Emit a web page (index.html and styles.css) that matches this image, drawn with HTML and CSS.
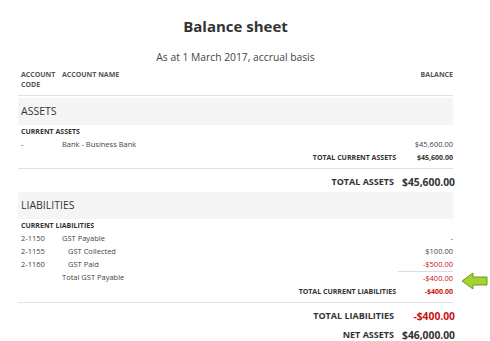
FILE: index.html
```html
<!DOCTYPE html>
<html>
<head>
<meta charset="utf-8">
<link rel="stylesheet" href="styles.css">
</head>
<body>
<div class="report">
  <h1 class="title">Balance sheet</h1>
  <div class="subtitle">As at 1 March 2017, accrual basis</div>

  <div class="row head">
    <div class="code">ACCOUNT<br>CODE</div>
    <div class="name">ACCOUNT NAME</div>
    <div class="amt">BALANCE</div>
  </div>

  <div class="band">ASSETS</div>
  <div class="row sub"><div class="span">CURRENT ASSETS</div></div>
  <div class="row"><div class="code">-</div><div class="name">Bank - Business Bank</div><div class="amt">$45,600.00</div></div>
  <div class="row tot"><div class="label">TOTAL CURRENT ASSETS</div><div class="amt">$45,600.00</div></div>
  <div class="divider"></div>
  <div class="row big"><div class="label">TOTAL ASSETS</div><div class="amt">$45,600.00</div></div>

  <div class="band">LIABILITIES</div>
  <div class="row sub"><div class="span">CURRENT LIABILITIES</div></div>
  <div class="row"><div class="code">2-1150</div><div class="name">GST Payable</div><div class="amt">-</div></div>
  <div class="row"><div class="code">2-1155</div><div class="name indent">GST Collected</div><div class="amt">$100.00</div></div>
  <div class="row"><div class="code">2-1160</div><div class="name indent">GST Paid</div><div class="amt neg">-$500.00</div></div>
  <div class="row subtot"><div class="code"></div><div class="name">Total GST Payable</div><div class="amt neg ruled">-$400.00</div></div>
  <div class="row tot"><div class="label">TOTAL CURRENT LIABILITIES</div><div class="amt neg">-$400.00</div></div>
  <div class="divider"></div>
  <div class="row big"><div class="label">TOTAL LIABILITIES</div><div class="amt neg">-$400.00</div></div>
  <div class="row big net"><div class="label">NET ASSETS</div><div class="amt">$46,000.00</div></div>

  <svg class="arrow" width="28" height="18" viewBox="0 0 28 18">
    <polygon points="1,9 12,1 12,5 26,5 26,13 12,13 12,17" fill="#a4d233" stroke="#6f9a1e" stroke-width="1" stroke-linejoin="round"/>
  </svg>
</div>
</body>
</html>
```

FILE: styles.css
```css
* { box-sizing: border-box; }
html, body { margin: 0; padding: 0; background: #fff; }
body {
  font-family: "Open Sans", "Liberation Sans", sans-serif;
  color: #444;
}
.report {
  position: relative;
  width: 435px;
  margin-left: 18px;
  padding-top: 16px;
}
.title {
  margin: 0;
  font-size: 15px;
  line-height: 20px;
  font-weight: 700;
  color: #333;
  text-align: center;
}
.subtitle {
  margin-top: 13px;
  font-size: 10.3px;
  line-height: 16px;
  text-align: center;
  color: #444;
}
.row {
  display: grid;
  grid-template-columns: 41px 1fr 55px;
  padding-left: 3px;
  font-size: 7.5px;
  line-height: 13px;
}
.row .amt { text-align: right; }
.row .label {
  grid-column: 1 / 3;
  text-align: right;
  padding-right: 2px;
}
.row .span { grid-column: 1 / 4; }
.head {
  margin-top: 5px;
  padding-bottom: 5px;
  border-bottom: 1px solid #e2e2e2;
  font-size: 7px;
  line-height: 10px;
  font-weight: 700;
  color: #555;
}
.band {
  margin-top: 2px;
  height: 27px;
  padding-left: 3px;
  background: #f5f5f5;
  font-size: 10.5px;
  line-height: 27px;
  color: #333;
}
.sub {
  font-weight: 700;
  font-size: 7px;
  color: #333;
}
.indent { padding-left: 6px; }
.tot {
  font-weight: 700;
  font-size: 7px;
  color: #333;
}
.neg { color: #cc1111; }
.ruled { border-top: 1px solid #dcdcdc; }
.divider {
  margin-top: 4px;
  border-top: 1px solid #e0e0e0;
}
.big {
  margin-top: 5px;
  grid-template-columns: 41px 1fr 57px;
  font-size: 9px;
  line-height: 16px;
  font-weight: 700;
  color: #333;
}
.big .amt { font-size: 10.3px; margin-right: -2px; }
.net { margin-top: 3px; }
.arrow {
  position: absolute;
  left: 443px;
  top: 272px;
}
```
